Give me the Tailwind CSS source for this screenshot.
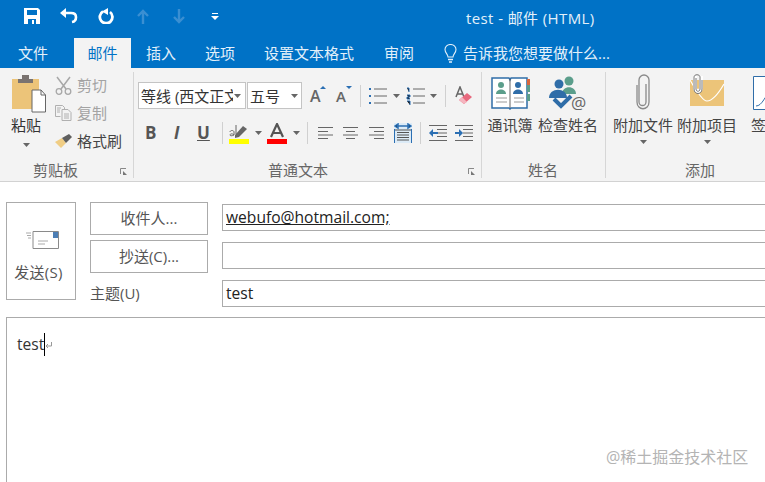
<!DOCTYPE html>
<html>
<head>
<meta charset="utf-8">
<script src="https://cdn.jsdelivr.net/npm/@tailwindcss/browser@4"></script>
</head>
<body class="w-[765px] h-[482px] overflow-hidden bg-white text-[15px] text-[#444] font-['Open_Sans','Noto_Sans_CJK_SC',sans-serif]">

<!-- title bar -->
<div class="relative flex items-center h-[38px] pb-[6px] bg-[#0072c6] text-white">
  <svg class="ml-[24px] w-[16px] h-[16px]" viewBox="0 0 16 16"><path fill="#fff" d="M0 0h14l2 2v14H0z"/><path fill="#0072c6" d="M3 2h10v5H3zM4 11h8v5H4z"/><path fill="#fff" d="M8 12h2v4H8z"/></svg>
  <svg class="ml-[20px] w-[18px] h-[16px]" viewBox="0 0 18 16"><path fill="none" stroke="#fff" stroke-width="2.600" d="M3 5h8c7 0 6 8 1 9"/><path fill="#fff" d="M6 0v10L0 5z"/></svg>
  <svg class="ml-[20px] w-[16px] h-[16px]" viewBox="0 0 16 16"><path fill="none" stroke="#fff" stroke-width="2.800" d="M5 3.500a6.300 6.300 0 1 0 7 .5"/><path fill="#fff" d="M10 0v7L4 3.500z"/></svg>
  <svg class="ml-[23px] w-[12px] h-[15px]" viewBox="0 0 12 15"><path fill="none" stroke="#3a8fd2" stroke-width="2.400" d="M6 15V2M1 7l5-5 5 5"/></svg>
  <svg class="ml-[24px] w-[12px] h-[15px]" viewBox="0 0 12 15"><path fill="none" stroke="#3a8fd2" stroke-width="2.400" d="M6 0v13M1 8l5 5 5-5"/></svg>
  <svg class="ml-[26px] w-[8px] h-[7px]" viewBox="0 0 8 7"><path fill="#fff" d="M1 0h6v1H1zM0 3h8L4 7z"/></svg>
  <span class="absolute left-[466px] top-[8px] leading-[20px] tracking-[0.4px] text-[#e3f0fa]">test - 邮件 (HTML)</span>
</div>

<!-- tabs -->
<div class="flex items-stretch h-[30px] bg-[#0072c6] text-[#e3f0fa] leading-[30px]">
  <span class="ml-[18px]">文件</span>
  <span class="ml-[26px] w-[57px] text-center bg-[#f3f3f3] text-[#0072c6]">邮件</span>
  <span class="ml-[15px]">插入</span>
  <span class="ml-[29px]">选项</span>
  <span class="ml-[29px]">设置文本格式</span>
  <span class="ml-[30px]">审阅</span>
  <svg class="ml-[30px] mt-[6px] w-[13px] h-[19px]" viewBox="0 0 13 19"><path fill="none" stroke="#e3f0fa" stroke-width="1.100" d="M4 13c0-3-3-4-3-7.500a5.500 5 0 0 1 11 0C12 9 9 10 9 13z"/><path stroke="#e3f0fa" stroke-width="1.500" d="M4 15.500h5M5 18h3"/></svg>
  <span class="ml-[6px]">告诉我您想要做什么...</span>
</div>

<!-- ribbon -->
<div class="flex h-[114px] bg-[#f3f3f3] border-b border-[#d2d2d2]">

  <!-- 剪贴板 -->
  <div class="relative w-[134px] h-[113px] shrink-0 flex flex-col">
    <div class="flex h-[92px]">
      <div class="w-[55px] flex flex-col items-center pt-[6px]">
        <svg class="ml-[2px] w-[34px] h-[39px]" viewBox="0 0 34 39">
          <path fill="#ecc479" d="M0 5h27v30H0z"/>
          <path fill="#7a7370" d="M6 5h15v4H6z"/><path fill="#7a7370" d="M10 1h7v5h-7z"/>
          <path fill="#fff" stroke="#666" d="M20 16h9l4.500 5v17H20z"/>
          <path fill="none" stroke="#666" d="M29 16v5h4.500"/>
        </svg>
        <span class="mt-[2px] -ml-[3px] leading-[20px] text-[#333]">粘贴</span>
        <svg class="mt-[8px] -ml-[3px] w-[7px] h-[4px]" viewBox="0 0 7 4"><path fill="#666" d="M0 0h7L3.500 4z"/></svg>
      </div>
      <div class="flex flex-col pt-[3px] text-[#a3a3a3]">
        <div class="flex items-center h-[28px]">
          <svg class="w-[17px] h-[19px]" viewBox="0 0 17 19"><path fill="none" stroke="#a8a8a8" stroke-width="1.500" d="M2 1l9 12M15 1L6 13"/><circle cx="4" cy="15.500" r="2.800" fill="none" stroke="#a8a8a8" stroke-width="1.300"/><circle cx="13" cy="15.500" r="2.800" fill="none" stroke="#a8a8a8" stroke-width="1.300"/></svg>
          <span class="ml-[5px]">剪切</span>
        </div>
        <div class="flex items-center h-[28px]">
          <svg class="w-[17px] h-[16px]" viewBox="0 0 17 16"><path fill="none" stroke="#b0b0b0" d="M.5.500h7l2 2v2M.5.500v11h5M7 4.500h6l3 3v8H7zM9 9h5M9 11h5M9 13h5M2 3h4M2 5h3M2 7h3"/></svg>
          <span class="ml-[5px]">复制</span>
        </div>
        <div class="flex items-center h-[28px] text-[#444]">
          <svg class="w-[17px] h-[14px]" viewBox="0 0 17 14"><path fill="#f0cd84" d="M0 8l7-4 4 5-5 5z"/><path fill="#5f5f5f" d="M7 4l7-4 3 3-6 6z"/></svg>
          <span class="ml-[5px]">格式刷</span>
        </div>
      </div>
    </div>
    <div class="h-[20px] leading-[20px] pl-[33px] text-[#666]">剪贴板</div>
    <svg class="absolute left-[120px] top-[100px] w-[7px] h-[7px]" viewBox="0 0 7 7"><path fill="none" stroke="#888" d="M.5 6V.500H6"/><path fill="#777" d="M3 3l4 4H3z"/></svg>
    <div class="absolute right-0 top-[4px] w-px h-[106px] bg-[#d6d6d6]"></div>
  </div>

  <!-- 普通文本 -->
  <div class="relative w-[348px] h-[113px] shrink-0 flex flex-col">
    <div class="flex items-center h-[27px] mt-[14px] pl-[4px]">
      <div class="w-[108px] h-[27px] flex items-center bg-white border border-[#c4c4c4] overflow-hidden pl-[2px]">
        <span class="w-[92px] shrink-0 overflow-hidden whitespace-nowrap leading-[20px] text-[#333]">等线 (西文正文)</span>
        <svg class="ml-[1px] w-[7px] h-[4px] shrink-0" viewBox="0 0 7 4"><path fill="#666" d="M0 0h7L3.500 4z"/></svg>
      </div>
      <div class="ml-px w-[55px] h-[27px] flex items-center bg-white border border-[#c4c4c4] pl-[2px]">
        <span class="w-[41px] leading-[20px] text-[#333]">五号</span>
        <svg class="w-[7px] h-[4px]" viewBox="0 0 7 4"><path fill="#666" d="M0 0h7L3.500 4z"/></svg>
      </div>
      <div class="ml-[8px] w-[16px] relative font-semibold text-[16px] leading-[20px] text-[#666]">A<svg class="absolute right-0 top-0 w-[6px] h-[3px]" viewBox="0 0 6 3"><path fill="#2b6fb3" d="M0 3h6L3 0z"/></svg></div>
      <div class="ml-[10px] w-[16px] relative font-semibold text-[15px] leading-[20px] text-[#666]">A<svg class="absolute right-0 top-0 w-[6px] h-[3px]" viewBox="0 0 6 3"><path fill="#2b6fb3" d="M0 0h6L3 3z"/></svg></div>
      <div class="ml-[8px] w-px h-[22px] bg-[#d0d0d0]"></div>
      <svg class="ml-[8px] w-[18px] h-[18px]" viewBox="0 0 18 18"><path fill="#2b6fb3" d="M0 1h2v2H0zM0 8h2v2H0zM0 15h2v2H0z"/><path stroke="#666" d="M5 2h13M5 9h13M5 16h13"/></svg>
      <svg class="ml-[6px] w-[7px] h-[4px]" viewBox="0 0 7 4"><path fill="#666" d="M0 0h7L3.500 4z"/></svg>
      <svg class="ml-[6px] w-[19px] h-[18px]" viewBox="0 0 19 18"><path stroke="#2b6fb3" d="M1 1h2v4M1 8h3v2H1v2h3M1 14h3v4"/><path stroke="#666" d="M7 2h12M7 9h12M7 16h12"/></svg>
      <svg class="ml-[5px] w-[7px] h-[4px]" viewBox="0 0 7 4"><path fill="#666" d="M0 0h7L3.500 4z"/></svg>
      <div class="ml-[8px] w-px h-[22px] bg-[#d0d0d0]"></div>
      <svg class="ml-[9px] w-[17px] h-[20px]" viewBox="0 0 17 20"><path fill="none" stroke="#666" stroke-width="1.500" d="M1 11L5 1l4 10M2.500 8h5"/><path fill="#e8697e" d="M4 14l8-7 5 4-8 7z"/><path fill="#f5b5bf" d="M4 14l3-3 5 5-3 2z"/></svg>
    </div>
    <div class="flex items-center h-[24px] mt-[12px] pl-[4px] text-[#555]">
      <span class="ml-[7px] w-[12px] font-bold text-[17px] leading-[22px]">B</span>
      <span class="ml-[17px] w-[10px] font-bold italic text-[17px] leading-[22px]">I</span>
      <span class="ml-[13px] w-[12px] font-bold underline text-[17px] leading-[22px]">U</span>
      <div class="ml-[13px] w-px h-[22px] bg-[#d0d0d0]"></div>
      <svg class="ml-[6px] w-[20px] h-[21px]" viewBox="0 0 20 21"><path fill="#ffff00" d="M0 16h20v5H0z"/><path fill="#666" d="M6 12l8-9 4 3-8 8-4 1z"/><path fill="none" stroke="#666" d="M1 9c0-2 4-2 4 0v3c-2-2-4-1-4 0s2 1 4 0M7 2v9"/></svg>
      <svg class="ml-[6px] w-[7px] h-[4px]" viewBox="0 0 7 4"><path fill="#666" d="M0 0h7L3.500 4z"/></svg>
      <svg class="ml-[5px] w-[20px] h-[21px]" viewBox="0 0 20 21"><path fill="#f00" d="M0 16h20v5H0z"/><path fill="none" stroke="#555" stroke-width="2.200" d="M4 14L10 1l6 13M6 10h8"/></svg>
      <svg class="ml-[6px] w-[7px] h-[4px]" viewBox="0 0 7 4"><path fill="#666" d="M0 0h7L3.500 4z"/></svg>
      <div class="ml-[7px] w-px h-[22px] bg-[#d0d0d0]"></div>
      <svg class="ml-[10px] w-[15px] h-[12px]" viewBox="0 0 15 12"><path stroke="#666" d="M0 .500h15M0 4.500h10M0 8h15M0 11.500h10"/></svg>
      <svg class="ml-[10px] w-[15px] h-[12px]" viewBox="0 0 15 12"><path stroke="#666" d="M0 .500h15M3 4.500h9M0 8h15M3 11.500h9"/></svg>
      <svg class="ml-[11px] w-[15px] h-[12px]" viewBox="0 0 15 12"><path stroke="#666" d="M0 .500h15M5 4.500h10M0 8h15M5 11.500h10"/></svg>
      <svg class="ml-[10px] w-[18px] h-[20px]" viewBox="0 0 18 20"><path fill="#dcebf7" d="M0 0h18v20H0z"/><path stroke="#2b6fb3" stroke-width="1.500" d="M3 3h12M1 3l3-2v4zM17 3l-3-2v4z"/><path stroke="#555" d="M0 7h18M3 9.500h12M3 12h12M3 14.500h12M3 17h12"/><path stroke="#2b6fb3" d="M.5 6v14M17.500 6v14"/></svg>
      <div class="ml-[8px] w-px h-[22px] bg-[#d0d0d0]"></div>
      <svg class="ml-[8px] w-[18px] h-[16px]" viewBox="0 0 18 16"><path stroke="#666" d="M0 .500h18M8 4.500h10M8 8h10M8 11.500h10M0 15.500h18"/><path stroke="#2b6fb3" stroke-width="2" d="M3 8h6"/><path fill="#2b6fb3" d="M0 8l4-4v8z"/></svg>
      <svg class="ml-[8px] w-[18px] h-[16px]" viewBox="0 0 18 16"><path stroke="#666" d="M0 .500h18M8 4.500h10M8 8h10M8 11.500h10M0 15.500h18"/><path stroke="#2b6fb3" stroke-width="2" d="M0 8h5"/><path fill="#2b6fb3" d="M8 8L4 4v8z"/></svg>
    </div>
    <div class="h-[20px] leading-[20px] mt-[15px] pl-[134px] text-[#666]">普通文本</div>
    <svg class="absolute left-[334px] top-[100px] w-[7px] h-[7px]" viewBox="0 0 7 7"><path fill="none" stroke="#888" d="M.5 6V.500H6"/><path fill="#777" d="M3 3l4 4H3z"/></svg>
    <div class="absolute right-0 top-[4px] w-px h-[106px] bg-[#d6d6d6]"></div>
  </div>

  <!-- 姓名 -->
  <div class="relative w-[124px] h-[113px] shrink-0 flex flex-col">
    <div class="flex h-[92px] pl-[4px] pt-[8px] text-[#444]">
      <div class="w-[48px] flex flex-col items-center">
        <svg class="w-[39px] h-[34px]" viewBox="0 0 39 34">
          <path fill="#fff" stroke="#2f6da8" stroke-width="1.500" d="M1 2l17 0 1 2 1-2h16v30H20l-1 1-1-1H1z"/>
          <path stroke="#666" d="M19 3v29"/>
          <path fill="#d9683f" d="M36 3h3v6h-3z"/><path fill="#5b9e8b" d="M36 9h3v7h-3zM36 18h3v7h-3z"/>
          <circle cx="10" cy="9" r="3" fill="#5b9e8b"/><path fill="#5b9e8b" d="M5 18c0-6 10-6 10 0z"/>
          <circle cx="27" cy="9" r="3" fill="#2f6da8"/><path fill="#2f6da8" d="M22 18c0-6 10-6 10 0z"/>
          <path stroke="#999" d="M5 22h11M5 26h11M23 22h10M23 26h10"/>
        </svg>
        <span class="mt-[5px] leading-[20px] whitespace-nowrap">通讯簿</span>
      </div>
      <div class="ml-[4px] w-[60px] flex flex-col items-center">
        <svg class="w-[38px] h-[34px]" viewBox="0 0 38 34">
          <circle cx="20" cy="5" r="4.500" fill="#5b9e8b"/><path fill="#5b9e8b" d="M13 18c0-9 14-9 14 0z"/>
          <circle cx="10" cy="8" r="4.500" fill="#2f6da8"/><path fill="#2f6da8" d="M0 22c0-11 18-11 18 0z"/>
          <path fill="none" stroke="#2f6da8" stroke-width="4" d="M5 23l7 7 10-10"/>
          <text x="22" y="33" font-size="17" fill="#666" font-family="Open Sans">@</text>
        </svg>
        <span class="mt-[5px] leading-[20px] whitespace-nowrap">检查姓名</span>
      </div>
    </div>
    <div class="h-[20px] leading-[20px] pl-[46px] text-[#666]">姓名</div>
    <div class="absolute right-0 top-[4px] w-px h-[106px] bg-[#d6d6d6]"></div>
  </div>

  <!-- 添加 -->
  <div class="relative grow h-[113px] flex flex-col overflow-hidden">
    <div class="flex h-[92px] pl-[7px] pt-[6px] text-[#444]">
      <div class="w-[60px] shrink-0 flex flex-col items-center">
        <svg class="w-[14px] h-[36px]" viewBox="0 0 14 36"><path fill="none" stroke="#8a8a8a" stroke-width="1.300" d="M10 10v18a3.500 3.500 0 0 1-7 0V6a5 5 0 0 1 10 0v22c0 9-12 9-12 0V11"/></svg>
        <span class="mt-[5px] leading-[20px] whitespace-nowrap">附加文件</span>
        <svg class="mt-[5px] w-[7px] h-[4px]" viewBox="0 0 7 4"><path fill="#666" d="M0 0h7L3.500 4z"/></svg>
      </div>
      <div class="ml-[4px] w-[60px] shrink-0 flex flex-col items-center">
        <svg class="w-[36px] h-[36px]" viewBox="0 0 36 36"><path fill="#ecc479" d="M1 6h34v26H1z"/><path fill="none" stroke="#fff" stroke-width="1.200" d="M1 6c8 14 13 21 17 21s10-5 17-17"/><path fill="none" stroke="#fff" stroke-width="4" d="M6 2v12c0 4 6 4 6 0V2"/><path fill="none" stroke="#777" d="M7 4v11c0 3 4 3 4 0V3c0-3-6-3-6 0v12c0 6 8 6 8 0V6"/></svg>
        <span class="mt-[5px] leading-[20px] whitespace-nowrap">附加项目</span>
        <svg class="mt-[5px] w-[7px] h-[4px]" viewBox="0 0 7 4"><path fill="#666" d="M0 0h7L3.500 4z"/></svg>
      </div>
      <div class="ml-[14px] w-[30px] shrink-0 flex flex-col">
        <svg class="ml-[2px] w-[28px] h-[36px]" viewBox="0 0 28 36"><path fill="#fff" stroke="#2f6da8" d="M.5 2.500h27v33H.5z"/><path fill="none" stroke="#2f6da8" d="M3 32c6 0 9-10 11-10s2 7 8 7"/></svg>
        <span class="mt-[5px] leading-[20px] whitespace-nowrap">签名</span>
      </div>
    </div>
    <div class="h-[20px] leading-[20px] pl-[79px] text-[#666]">添加</div>
  </div>
</div>

<!-- compose -->
<div class="flex pl-[6px] pt-[20px]">
  <div class="w-[70px] h-[98px] shrink-0 flex flex-col items-center border border-[#ababab] text-[#555]">
    <svg class="mt-[28px] ml-[2px] w-[33px] h-[18px]" viewBox="0 0 33 18"><path fill="#fff" stroke="#8a8a8a" d="M7 .500h25.500v17H7z"/><path fill="#4d7fb5" d="M27 1h5v6h-5z"/><path stroke="#aaa" d="M12 10h10M12 13h7M0 2h5M1 4.500h4M2 7h3"/></svg>
    <span class="mt-[13px] -ml-[5px] leading-[20px] tracking-[0.3px] whitespace-nowrap">发送(S)</span>
  </div>
  <div class="ml-[14px] w-[118px] shrink-0 flex flex-col text-[#555]">
    <div class="h-[33px] flex items-center justify-center border border-[#ababab]">收件人...</div>
    <div class="mt-[5px] h-[33px] flex items-center justify-center border border-[#ababab]">抄送(C)...</div>
    <div class="mt-[10px] leading-[20px]">主题(U)</div>
  </div>
  <div class="ml-[14px] grow flex flex-col pt-[2px] -mr-[4px] text-[15.600px] text-[#222]">
    <div class="h-[27px] leading-[25px] px-[3px] border border-[#ababab] underline">webufo@hotmail.com;</div>
    <div class="mt-[11px] h-[27px] border border-[#ababab]"></div>
    <div class="mt-[11px] h-[27px] leading-[25px] px-[3px] border border-[#ababab]">test</div>
  </div>
</div>

<div class="relative ml-[6px] -mr-[4px] mt-[10px] h-[180px] border border-[#ababab] pl-[10px] pt-[15px]">
  <div class="flex items-center h-[23px] text-[15.600px] text-[#333]">
    <span>test</span>
    <div class="w-px h-[23px] bg-black"></div>
    <svg class="w-[7px] h-[7px] mt-[2px]" viewBox="0 0 7 7"><path fill="none" stroke="#999" d="M6.500 0v4H1M3 2L1 4l2 2"/></svg>
  </div>
  <span class="absolute left-[599px] top-[129px] text-[16px] leading-[20px] text-[#b4b4b4] whitespace-nowrap">@稀土掘金技术社区</span>
</div>

</body>
</html>
